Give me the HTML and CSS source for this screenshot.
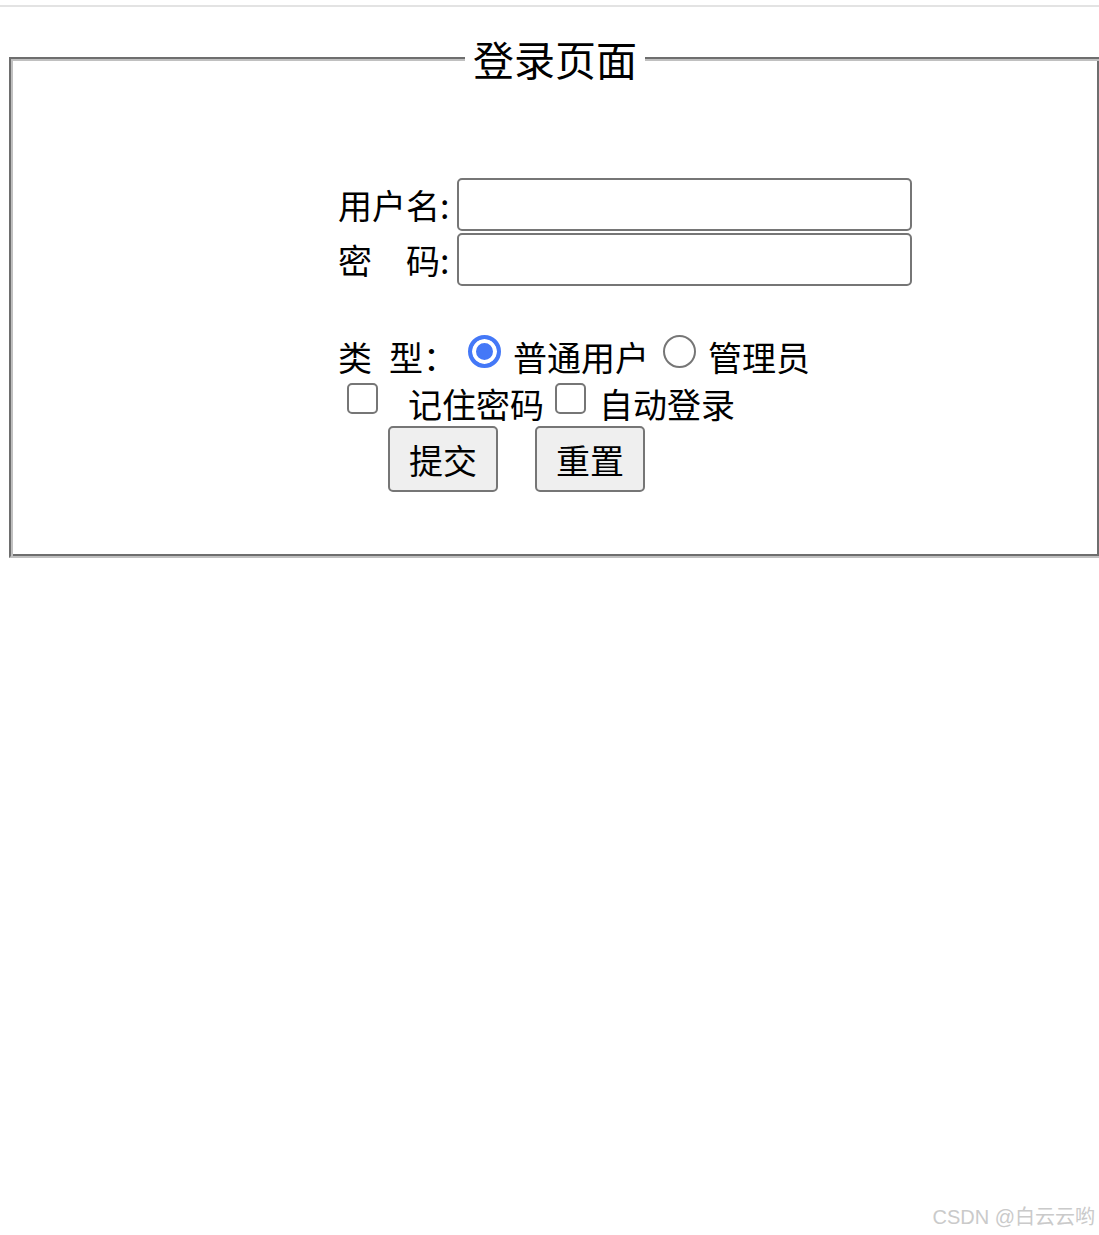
FILE: index.html
```html
<!DOCTYPE html>
<html lang="zh-CN">
<head>
    <meta charset="UTF-8">
    <meta name="viewport" content="width=device-width, initial-scale=1.0">
    <title>登录页面</title>
    <link rel="stylesheet" href="styles.css">
</head>
<body>
    <div class="topline"></div>

    <fieldset class="login">
        <legend>登录页面</legend>
        <form class="login-form" action="#" method="post">
            <div class="field-row">
                <label for="username">用户名:</label>
                <input type="text" id="username" name="username">
            </div>
            <div class="field-row">
                <label for="password">密　码:</label>
                <input type="password" id="password" name="password">
            </div>

            <div class="type-row">
                <span class="type-label">类&ensp;型：</span>
                <input type="radio" name="type" id="typeUser" class="radio" checked>
                <label for="typeUser" class="opt">普通用户</label>
                <input type="radio" name="type" id="typeAdmin" class="radio">
                <label for="typeAdmin" class="opt">管理员</label>
            </div>

            <div class="check-row">
                <input type="checkbox" id="remember" class="check first">
                <label for="remember" class="opt remember">记住密码</label>
                <input type="checkbox" id="autoLogin" class="check">
                <label for="autoLogin" class="opt">自动登录</label>
            </div>

            <div class="button-row">
                <button type="submit">提交</button>
                <button type="reset">重置</button>
            </div>
        </form>
    </fieldset>

    <div class="watermark">CSDN @白云云哟</div>
</body>
</html>
```

FILE: styles.css
```css
/* General Reset */
* {
    margin: 0;
    padding: 0;
    box-sizing: border-box;
}
html, body {
    overflow-x: hidden;
}
body {
    font-family: 'Noto Sans CJK SC', 'Liberation Sans', sans-serif;
    color: #000;
    background: #fff;
    min-height: 1235px;
    position: relative;
}
.topline {
    height: 2px;
    margin-top: 5px;
    background: #e3e3e3;
}

/* Fieldset with groove border */
.login {
    margin: 27px 0 0 9px;
    width: 1092px;
    padding: 0;
    border: 2px solid;
    border-color: #6e6e6e #c0c0c0 #c0c0c0 #6e6e6e;
    box-shadow: inset 2px 2px 0 #c0c0c0, inset -2px -2px 0 #6e6e6e;
}
.login legend {
    margin: 0 auto;
    padding: 0 8px;
    font-size: 41px;
    line-height: 48px;
    background: #fff;
}
.login-form {
    padding: 96px 0 64px 327px;
    font-size: 34px;
}

/* Text inputs */
.field-row {
    display: flex;
    align-items: center;
    height: 53px;
}
.field-row + .field-row {
    margin-top: 2px;
}
.field-row label {
    width: 119px;
    line-height: 53px;
    white-space: nowrap;
}
.field-row input {
    width: 455px;
    height: 53px;
    border: 2px solid #767676;
    border-radius: 5px;
    font-size: 26px;
    padding: 0 6px;
    outline: none;
}

/* Radio / checkbox rows */
.type-row,
.check-row {
    display: flex;
    align-items: center;
    white-space: nowrap;
}
.type-row {
    height: 50px;
    margin-top: 45px;
}
.check-row {
    height: 45px;
}
.type-label {
    width: 102px;
}
.opt {
    line-height: 45px;
}
.radio {
    appearance: none;
    width: 33px;
    height: 33px;
    border: 2px solid #767676;
    border-radius: 50%;
    margin: 0 12px 10px 14px;
    background: #fff;
}
.type-label + .radio {
    margin-left: 28px;
}
.radio:checked {
    border: 4px solid #4478f7;
    background: #4478f7;
    box-shadow: inset 0 0 0 4px #fff;
}
.check {
    appearance: none;
    width: 31px;
    height: 31px;
    border: 2px solid #767676;
    border-radius: 5px;
    background: #fff;
    margin: 0 13px 10px 11px;
}
.check.first {
    margin-left: 9px;
    margin-right: 30px;
}

/* Buttons */
.button-row {
    display: flex;
    gap: 37px;
    padding-left: 50px;
}
.button-row button {
    width: 110px;
    height: 66px;
    font-family: 'Noto Sans CJK SC', sans-serif;
    font-size: 34px;
    color: #000;
    background: #efefef;
    border: 2px solid #767676;
    border-radius: 5px;
}

.watermark {
    position: absolute;
    top: 1201px;
    right: 4px;
    font-family: 'Liberation Sans', 'Noto Sans CJK SC', sans-serif;
    font-size: 20px;
    color: #cacaca;
}
```
